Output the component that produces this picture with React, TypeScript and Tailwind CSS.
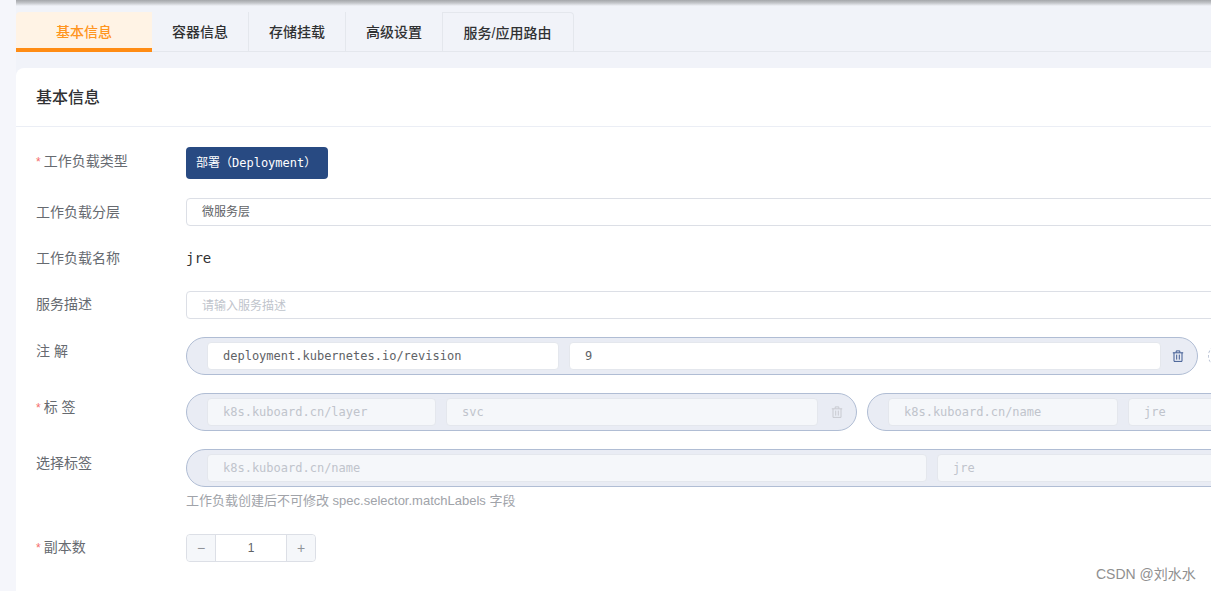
// Workload editor form: basic information tab
import type { ReactNode } from "react";

const SANS = "font-['Liberation_Sans','Noto_Sans_CJK_SC',sans-serif]";
const MONO = "font-['DejaVu_Sans_Mono','Noto_Sans_CJK_SC',monospace]";

const TABS = ["基本信息", "容器信息", "存储挂载", "高级设置", "服务/应用路由"];

function TrashIcon({ disabled }: { disabled?: boolean }) {
  return (
    <svg
      viewBox="0 0 12 12"
      className={`h-3 w-3 shrink-0 fill-none stroke-1 ${disabled ? "stroke-[#c8cad0]" : "stroke-[#3f5b92]"}`}
    >
      <path d="M0.8 2.8H11.2M4.2 2.6V0.9H7.8V2.6M2 2.8V11.4H10V2.8M4.7 4.6V9.6M7.3 4.6V9.6" />
    </svg>
  );
}

function Row({
  label,
  required,
  labelClass = "",
  children,
}: {
  label: string;
  required?: boolean;
  labelClass?: string;
  children: ReactNode;
}) {
  return (
    <div className="flex items-start">
      <div className={`w-[150px] shrink-0 text-sm leading-5 text-[#666a70] ${labelClass}`}>
        {required && <span className="mr-[3px] text-xs text-[#f56c6c]">*</span>}
        {label}
      </div>
      {children}
    </div>
  );
}

function PairField({
  children,
  disabled,
  className,
}: {
  children: ReactNode;
  disabled?: boolean;
  className: string;
}) {
  return (
    <div
      className={`flex h-7 items-center rounded border border-[#e4e7ed] pb-px pl-[15px] text-xs ${MONO} ${
        disabled ? "bg-[#f5f7fa] text-[#c0c4cc]" : "bg-white text-[#606266]"
      } ${className}`}
    >
      {children}
    </div>
  );
}

function Pill({ children, className }: { children: ReactNode; className: string }) {
  return (
    <div
      className={`flex h-[38px] shrink-0 items-center gap-[10px] rounded-[19px] border border-[#b0bdd4] bg-[#e9ecf4] pl-5 ${className}`}
    >
      {children}
    </div>
  );
}

export default function App() {
  return (
    <div className={`h-[591px] w-[1211px] overflow-hidden bg-[#f5f6fb] ${SANS}`}>
      <div className="ml-4 h-[591px] w-[1400px] bg-[#f1f3f9]">
        {/* shadow of the bar above the tabs */}
        <div className="h-[6px] bg-gradient-to-b from-[#a4a6aa] via-[#c4c6ca] to-[#f1f3f9]" />

        {/* tabs */}
        <div className="mt-[6px] flex h-10 border-b border-[#e4e7ed]">
          {TABS.map((tab, index) => (
            <div
              key={tab}
              className={
                index === 0
                  ? "flex h-10 w-[136px] items-center justify-center rounded-tl border-b-[4px] border-[#ff8c14] bg-[#fff3e5] pt-1 text-sm font-medium text-[#ff9520]"
                  : `flex h-10 items-center justify-center border-r border-[#e4e7ed] text-sm font-medium text-[#303133] ${
                      index === 4 ? "w-[131px] rounded-tr border-t pr-px" : "w-[97px]"
                    }`
              }
            >
              {tab}
            </div>
          ))}
        </div>

        {/* card */}
        <div className="mt-4 h-[600px] rounded-lg bg-white">
          <div className="flex h-[59px] items-center border-b border-[#ebeef5] pl-5 pt-[2px] text-base font-medium text-[#303133]">
            基本信息
          </div>

          <div className="flex flex-col pl-5 pt-5">
            <Row label="工作负载类型" required labelClass="pt-1">
              <div className={`flex h-8 w-[142px] items-center rounded bg-[#284a82] pl-[10px] text-xs text-white ${MONO}`}>
                部署（Deployment）
              </div>
            </Row>

            <div className="mt-[19px]">
              <Row label="工作负载分层" labelClass="pt-1">
                <div className="flex h-7 w-[1100px] items-center rounded border border-[#dcdfe6] pl-[15px] text-xs text-[#606266]">
                  微服务层
                </div>
              </Row>
            </div>

            <div className="mt-[22px]">
              <Row label="工作负载名称">
                <span className={`text-sm leading-5 text-[#303133] ${MONO}`}>jre</span>
              </Row>
            </div>

            <div className="mt-[23px]">
              <Row label="服务描述" labelClass="pt-[3px]">
                <div className="flex h-7 w-[1100px] items-center rounded border border-[#dcdfe6] pl-[15px] pt-px text-xs text-[#c0c4cc]">
                  请输入服务描述
                </div>
              </Row>
            </div>

            <div className="mt-[18px]">
              <Row label="注 解" labelClass="pt-1">
                <Pill className="w-[1012px]">
                  <PairField className="w-[352px] shrink-0">deployment.kubernetes.io/revision</PairField>
                  <PairField className="w-[592px] shrink-0">9</PairField>
                  <div className="ml-px">
                    <TrashIcon />
                  </div>
                </Pill>
                <div className="ml-[10px] h-6 w-6 shrink-0 self-center rounded-full border border-dashed border-[#bcc5d6]" />
              </Row>
            </div>

            <div className="mt-[18px]">
              <Row label="标 签" required labelClass="pt-1">
                <div className="flex gap-[10px]">
                  <Pill className="w-[671px]">
                    <PairField disabled className="w-[229px] shrink-0">k8s.kuboard.cn/layer</PairField>
                    <PairField disabled className="w-[372px] shrink-0">svc</PairField>
                    <div className="ml-[3px]">
                      <TrashIcon disabled />
                    </div>
                  </Pill>
                  <Pill className="w-[500px]">
                    <PairField disabled className="w-[230px] shrink-0">k8s.kuboard.cn/name</PairField>
                    <PairField disabled className="w-[200px] shrink-0">jre</PairField>
                  </Pill>
                </div>
              </Row>
            </div>

            <div className="mt-[18px]">
              <Row label="选择标签" labelClass="pt-1">
                <div>
                  <Pill className="w-[1100px]">
                    <PairField disabled className="w-[720px] shrink-0">k8s.kuboard.cn/name</PairField>
                    <PairField disabled className="w-[300px] shrink-0">jre</PairField>
                  </Pill>
                  <div className="mt-[4px] text-[13px] leading-5 text-[#a0a3a9]">
                    工作负载创建后不可修改 spec.selector.matchLabels 字段
                  </div>
                </div>
              </Row>
            </div>

            <div className="mt-[23px]">
              <Row label="副本数" required labelClass="pt-[3px]">
                <div className="flex h-7 w-[130px] items-center rounded border border-[#dcdfe6] text-[#909399]">
                  <div className="flex h-full w-[29px] items-center justify-center rounded-l border-r border-[#dcdfe6] bg-[#f5f7fa] text-sm">
                    −
                  </div>
                  <div className="flex-1 pb-px text-center text-xs text-[#606266]">1</div>
                  <div className="flex h-full w-[29px] items-center justify-center rounded-r border-l border-[#dcdfe6] bg-[#f5f7fa] text-sm">
                    +
                  </div>
                </div>
              </Row>
            </div>
          </div>
        </div>
      </div>

      {/* watermark */}
      <div className="absolute left-[1096px] top-[565px] text-sm leading-[18px] text-[#8f8f8f]">CSDN @刘水水</div>
    </div>
  );
}
